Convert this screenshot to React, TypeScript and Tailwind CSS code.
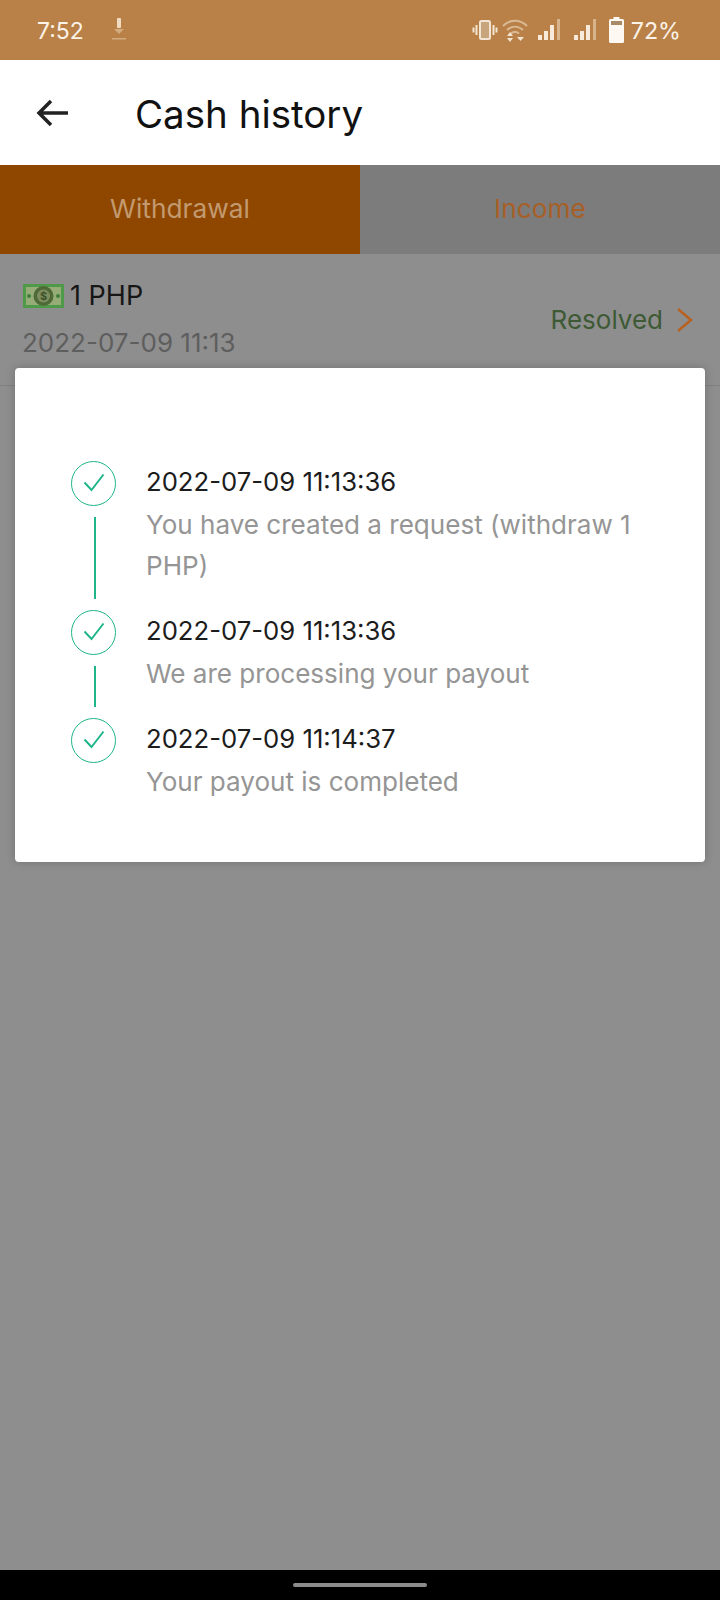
const font = "[font-family:Inter,'Liberation_Sans',sans-serif]"

const CheckCircle = () => (
  <div className="flex h-[45px] w-[45px] items-center justify-center rounded-full border border-[#1fb58a] bg-white">
    <svg width="26" height="26" viewBox="0 0 26 26" fill="none" stroke="#1fb58a" strokeWidth="2">
      <path d="M3.5 11.5 L10.5 19 L22.5 3.500" />
    </svg>
  </div>
)

const Signal = ({ className }: { className: string }) => (
  <svg className={className} width="23" height="22" viewBox="0 0 23 22">
    <rect x="0" y="16" width="4" height="5" fill="#f7eadb" />
    <rect x="6" y="12" width="4" height="9" fill="#f7eadb" />
    <rect x="12" y="6" width="4" height="15" fill="#f7eadb" />
    <rect x="19" y="0" width="3" height="21" fill="#d8b48c" />
  </svg>
)

const StatusIcons = () => (
  <div className="flex items-center">
    <svg width="26" height="22" viewBox="0 0 26 22" fill="none" stroke="#f3e5d3" strokeWidth="2">
      <rect x="8" y="2" width="10" height="18" rx="1.500" fill="#c9a57d" />
      <path d="M4.500 6v10M1.500 8.500v5M21.500 6v10M24.500 8.500v5" />
    </svg>
    <svg className="ml-[4px]" width="26" height="24" viewBox="0 0 26 24" fill="none" stroke="#d9b993" strokeWidth="2">
      <path d="M1 8c7-7 17-7 24 0M5 12c5-4.500 11-4.500 16 0M9 15.500c2.500-2 5.500-2 8 0" />
      <path d="M5 18l3-4 3 4zM5 20l3 4 3-4zM15 19h7l-3.500 4z" fill="#f3e5d3" stroke="none" />
    </svg>
    <Signal className="ml-[10px]" />
    <Signal className="ml-[13px]" />
    <svg className="ml-[12px]" width="15" height="26" viewBox="0 0 15 26">
      <path d="M4.500 0h6v2h3a1.500 1.500 0 0 1 1.500 1.500v21a1.500 1.500 0 0 1-1.500 1.500h-12a1.500 1.500 0 0 1-1.500-1.500v-21a1.500 1.500 0 0 1 1.500-1.500h3z" fill="#fdf8f1" />
      <rect x="2" y="4" width="11" height="4" fill="#a98a66" />
    </svg>
  </div>
)

const Bill = () => (
  <svg width="41" height="24" viewBox="0 0 41 24">
    <rect width="41" height="24" fill="#4f9a48" />
    <rect x="3" y="3" width="35" height="18" fill="#96ad78" />
    <circle cx="20.500" cy="12" r="10" fill="#4f6a38" />
    <circle cx="20.500" cy="12" r="6.500" fill="#7d8f5e" />
    <text x="20.500" y="16" textAnchor="middle" fontSize="11" fontWeight="700" fill="#3d4f2b">$</text>
    <circle cx="6" cy="12" r="2" fill="#3f7f3a" />
    <circle cx="35" cy="12" r="2" fill="#3f7f3a" />
  </svg>
)

const steps = [
  { time: '2022-07-09 11:13:36', text: 'You have created a request (withdraw 1 PHP)', line: 'h-[82px]' },
  { time: '2022-07-09 11:13:36', text: 'We are processing your payout', line: 'h-[41px]' },
  { time: '2022-07-09 11:14:37', text: 'Your payout is completed', line: '' },
]

export default function App() {
  return (
    <div className={`relative flex h-[1600px] w-[720px] flex-col overflow-hidden bg-[#8e8e8e] ${font}`}>
      {/* status bar */}
      <div className="flex h-[60px] items-center justify-between bg-[#b98147] pl-[37px] pr-[39px]">
        <div className="flex items-center">
          <span className="mt-[3px] text-[23px] text-[#fbf3e8]">7:52</span>
          <svg className="ml-[25px]" width="20" height="26" viewBox="0 0 20 26">
            <rect x="8" y="1" width="4" height="10" rx="1" fill="#f0dcc2" />
            <path d="M5 12h10l-5 5z" fill="#d4ab7e" />
            <rect x="3" y="21" width="14" height="1.500" fill="#d4ab7e" />
          </svg>
        </div>
        <div className="flex items-center gap-[7px]">
          <StatusIcons />
          <span className="mt-[3px] text-[23.300px] text-[#fbf3e8]">72%</span>
        </div>
      </div>

      {/* header */}
      <div className="flex h-[105px] items-center bg-white pl-[36px]">
        <svg width="34" height="30" viewBox="0 0 34 30" fill="none" stroke="#222222" strokeWidth="3.500">
          <path d="M32 15H3M15 3 3 15l12 12" />
        </svg>
        <h1 className="ml-[65px] mt-[4px] text-[38.500px] leading-none text-[#111111]">Cash history</h1>
      </div>

      {/* tabs */}
      <div className="flex h-[89px]">
        <div className="flex w-[360px] items-center justify-center bg-[#8f4700] pb-[2px] text-[26.300px] text-[#c39a70]">
          Withdrawal
        </div>
        <div className="flex flex-1 items-center justify-center bg-[#7c7c7c] pb-[2px] text-[26.300px] text-[#a85f27]">
          Income
        </div>
      </div>

      {/* record row */}
      <div className="flex h-[132px] items-center justify-between border-b border-[#808080] pl-[23px] pr-[26px]">
        <div className="flex flex-col gap-[16px]">
          <div className="flex items-center gap-[6px]">
            <Bill />
            <span className="text-[27px] leading-[30px] text-[#161616]">1 PHP</span>
          </div>
          <span className="-ml-[1px] text-[26px] leading-[32px] text-[#5e5e5e]">2022-07-09 11:13</span>
        </div>
        <div className="flex items-center gap-[13px]">
          <span className="text-[26px] text-[#3d5a35]">Resolved</span>
          <svg width="18" height="26" viewBox="0 0 18 26" fill="none" stroke="#b8611f" strokeWidth="2.500">
            <path d="M2 2l13 11L2 24" />
          </svg>
        </div>
      </div>

      {/* dialog */}
      <div className="absolute left-[15px] top-[368px] h-[494px] w-[690px] rounded-[4px] bg-white pl-[56px] pr-[60px] pt-[93px] shadow-[0_0_10px_rgba(0,0,0,0.2)]">
        {steps.map((step) => (
          <div key={step.text} className="flex">
            <div className="flex w-[45px] flex-col items-center">
              <CheckCircle />
              {step.line && <div className={`my-[11px] ml-[2px] w-[2px] bg-[#1fb58a] ${step.line}`} />}
            </div>
            <div className="ml-[30px] flex-1">
              <div className="mt-[1px] text-[25.700px] leading-[40px] text-[#1c1c1c]">{step.time}</div>
              <div className="mt-[2px] text-[26.050px] leading-[41px] text-[#959595]">{step.text}</div>
            </div>
          </div>
        ))}
      </div>

      {/* nav bar */}
      <div className="mt-auto flex h-[30px] items-center justify-center bg-black">
        <div className="h-[4px] w-[134px] rounded-full bg-[#8c8c8c]" />
      </div>
    </div>
  )
}
